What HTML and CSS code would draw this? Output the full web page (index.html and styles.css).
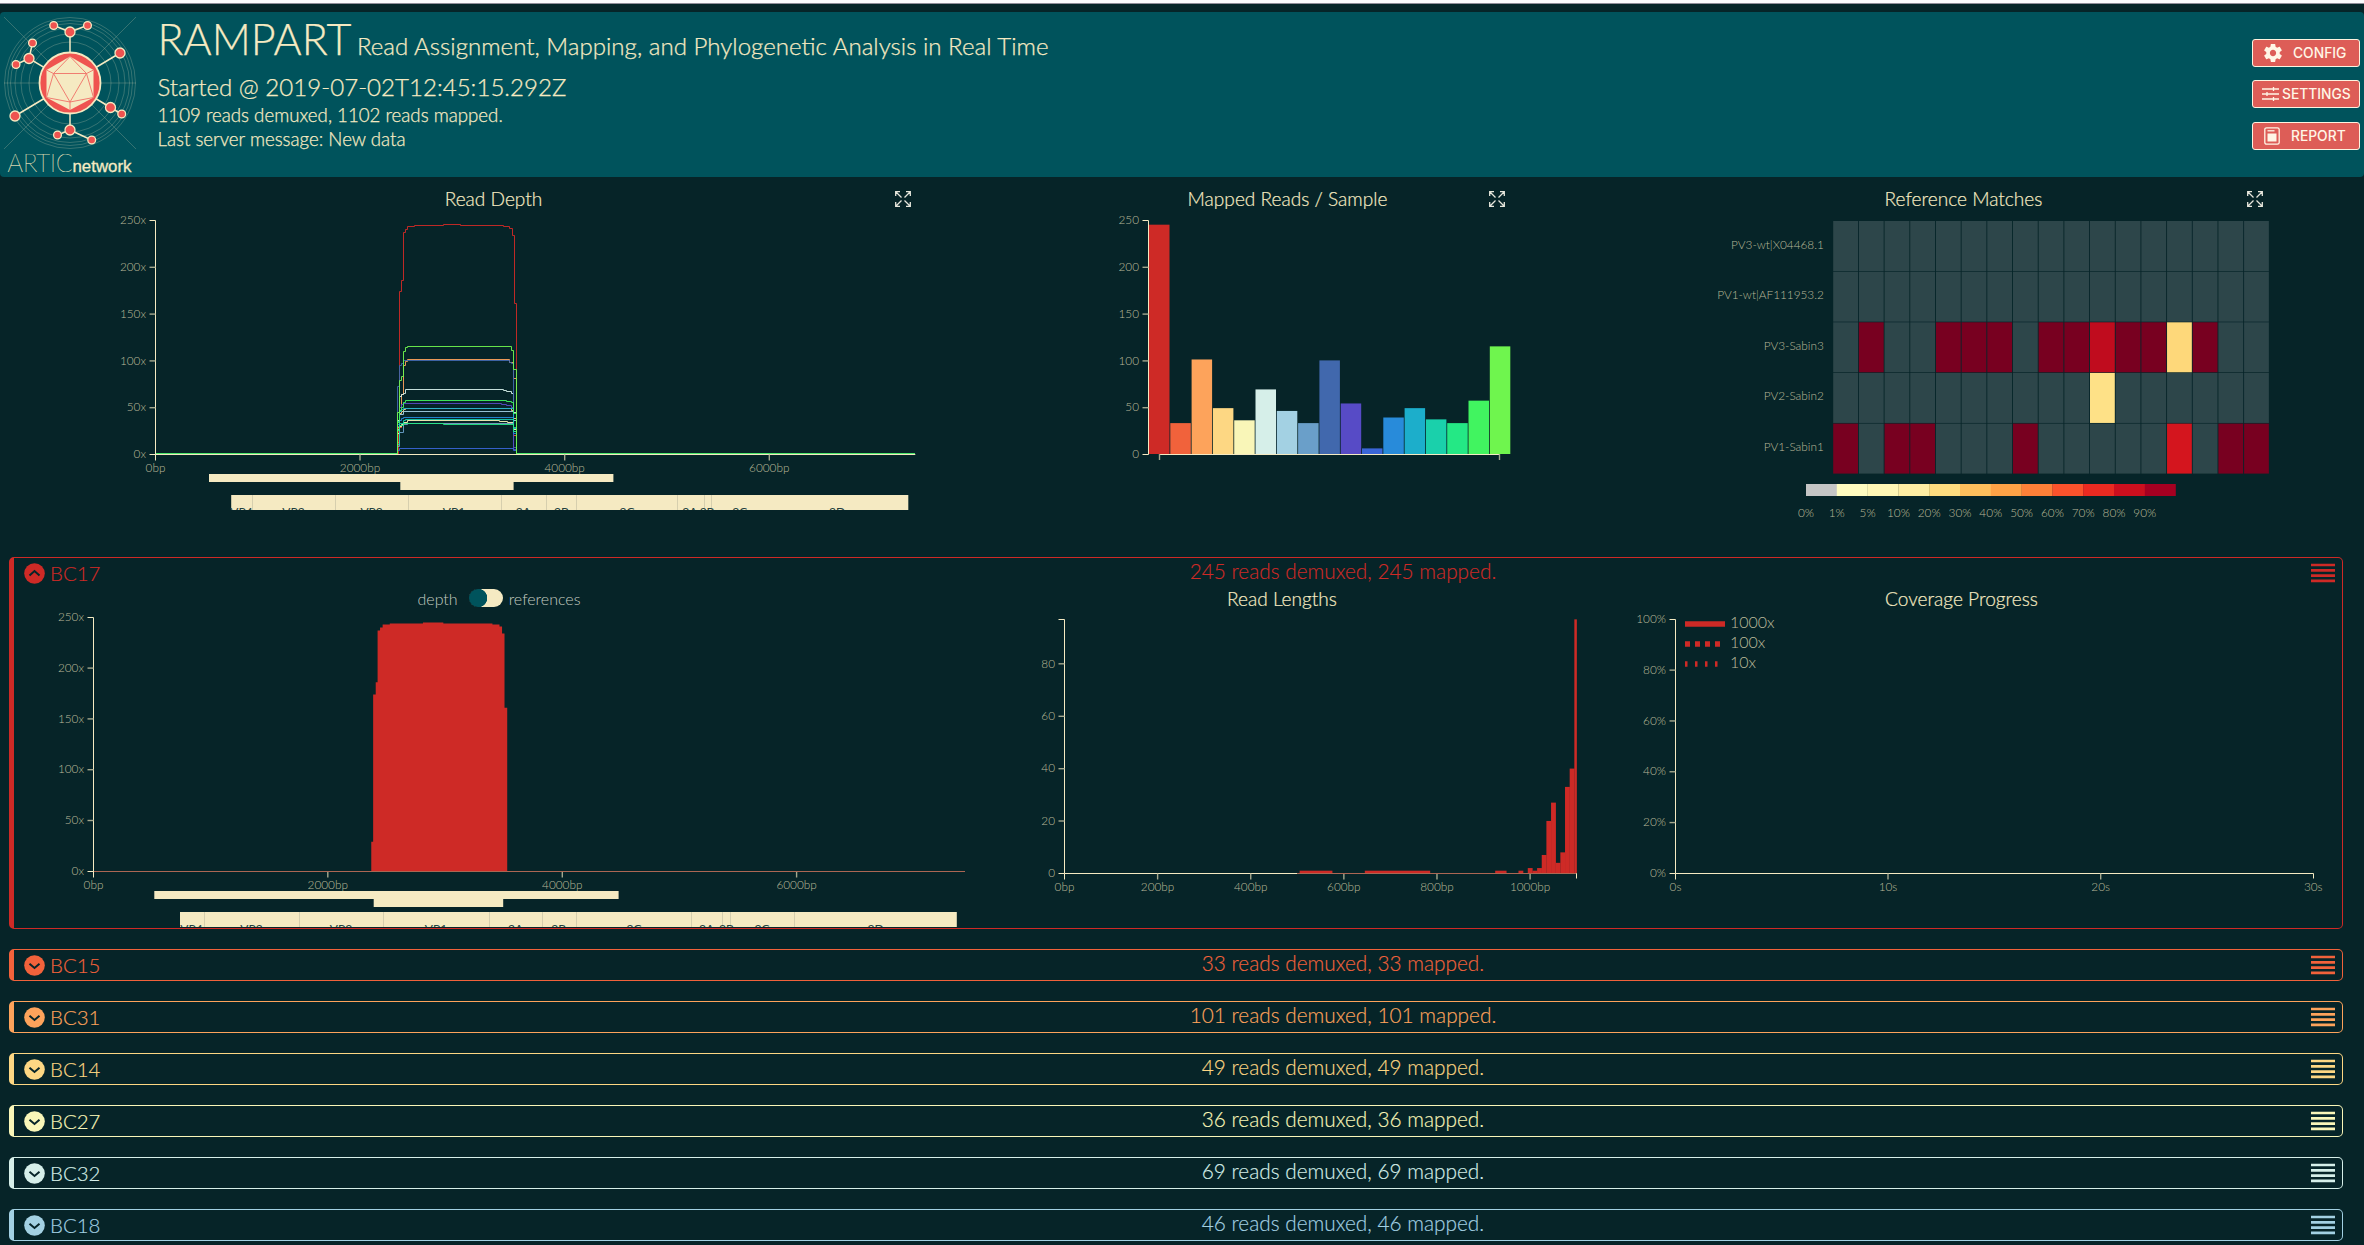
FILE: index.html
```html
<!DOCTYPE html>
<html lang="en">
<head>
<meta charset="utf-8">
<title>RAMPART</title>
<link rel="stylesheet" href="styles.css">
</head>
<body>
<svg class="defs" width="0" height="0" aria-hidden="true">
  <symbol id="expand" viewBox="0 0 16 16">
    <path d="M.7 5V.7H5M11 .7h4.300V5M15.300 11v4.300H11M5 15.300H.7V11M1 1l5.500 5.500M15 1L9.500 6.500M15 15L9.500 9.500M1 15l5.500-5.500" fill="none" stroke="currentColor" stroke-width="1.300"/>
  </symbol>
  <symbol id="down" viewBox="0 0 21 21">
    <circle cx="10.500" cy="10.500" r="10.300" fill="currentColor"/>
    <path d="M5.500 8.800l5 4.200 5-4.200" fill="none" stroke="#062428" stroke-width="2"/>
  </symbol>
  <symbol id="up" viewBox="0 0 21 21">
    <circle cx="10.500" cy="10.500" r="10.300" fill="currentColor"/>
    <path d="M5.500 12.500l5-4.500 5 4.500" fill="none" stroke="#062428" stroke-width="2"/>
  </symbol>
  <symbol id="menu" viewBox="0 0 24 20">
    <path d="M0 2h24M0 7.300h24M0 12.600h24M0 17.900h24" stroke="currentColor" stroke-width="2.700"/>
  </symbol>
</svg>

<header class="banner">
  <svg class="logo" width="140" height="165" viewBox="0 12 140 165">
    <g fill="none" stroke="#f5eac2" stroke-opacity=".28" stroke-width=".8">
      <circle cx="70" cy="83" r="65.500"/><circle cx="70" cy="83" r="62.500"/><circle cx="70" cy="83" r="59.500"/><circle cx="70" cy="83" r="55"/><circle cx="70" cy="83" r="49"/><circle cx="70" cy="83" r="41"/>
      <path d="M4 17l132 132M136 17L4 149M4 83h132"/>
    </g>
    <path d="M70 83V32L54 25.500M70 32l17-6.500M70 83l50-30M70 83L29 58.500 32.500 43M29 58.500L16 64.500M70 83L15 116M70 83l40.500 24.500 11 6.500M70 83v47l-12.500 5M70 130l21.500 10" fill="none" stroke="#f5eac2" stroke-width="1.500"/>
    <g fill="#ef5350" stroke="#f5eac2" stroke-width="1.300">
      <circle cx="70" cy="83" r="30.500" stroke-width="1.800"/>
      <circle cx="70" cy="32" r="5"/><circle cx="53.700" cy="25.500" r="3.900"/><circle cx="87.500" cy="25.500" r="3.900"/>
      <circle cx="120" cy="53" r="5"/><circle cx="29" cy="58.500" r="5"/><circle cx="32.500" cy="43" r="3.900"/><circle cx="16" cy="64.500" r="3.900"/>
      <circle cx="15" cy="116" r="5"/><circle cx="110.500" cy="107.500" r="5"/><circle cx="121.700" cy="114" r="3.900"/>
      <circle cx="70" cy="130" r="5"/><circle cx="57.500" cy="135" r="3.900"/><circle cx="91.700" cy="140" r="3.900"/>
    </g>
    <path d="M70 56.500L93.500 70v27.500L70 110 46.500 97.500V70z" fill="#f5eac2"/>
    <path d="M70 56.500L53.500 73.500h33zM53.500 73.500L70 102l16.500-28.500M46.500 70l7 3.500-7 24L70 102v8M93.500 70l-7 3.500 7 24L70 102" fill="none" stroke="#ef7068" stroke-width=".9"/>
    <text class="logo-thin" x="7.500" y="172" textLength="65" lengthAdjust="spacingAndGlyphs">ARTIC</text>
    <text class="logo-bold" x="72.500" y="172" textLength="59" lengthAdjust="spacingAndGlyphs">network</text>
  </svg>
  <div class="intro">
    <h1 class="name">RAMPART <span class="tagline">Read Assignment, Mapping, and Phylogenetic Analysis in Real Time</span></h1>
    <p class="started">Started @ 2019-07-02T12:45:15.292Z</p>
    <p class="info">1109 reads demuxed, 1102 reads mapped.</p>
    <p class="info">Last server message: New data</p>
  </div>
  <nav class="actions">
    <button class="action"><svg width="18" height="18" viewBox="2 2 20 20"><path fill="currentColor" d="M19.430 12.980c.04-.32.070-.64.070-.98s-.03-.66-.07-.98l2.110-1.650c.19-.15.240-.42.120-.64l-2-3.460c-.12-.22-.39-.3-.61-.22l-2.490 1c-.52-.4-1.080-.73-1.690-.98l-.38-2.650C14.460 2.180 14.250 2 14 2h-4c-.25 0-.46.180-.49.420l-.38 2.650c-.61.250-1.170.590-1.690.980l-2.490-1c-.23-.09-.49 0-.61.220l-2 3.460c-.13.220-.07.490.120.640l2.110 1.650c-.04.320-.07.650-.07.980s.030.660.070.980l-2.110 1.650c-.19.150-.24.420-.12.640l2 3.460c.12.220.390.300.610.220l2.490-1c.52.400 1.080.730 1.690.980l.38 2.650c.03.240.240.420.490.420h4c.25 0 .46-.18.490-.42l.38-2.650c.61-.25 1.170-.59 1.690-.98l2.490 1c.23.090.490 0 .61-.22l2-3.460c.12-.22.070-.49-.12-.64l-2.110-1.650zM12 15.500c-1.930 0-3.500-1.570-3.500-3.500s1.570-3.500 3.500-3.500 3.500 1.570 3.500 3.500-1.570 3.500-3.500 3.500z"/></svg><span class="action-text">CONFIG</span></button>
    <button class="action action-tight"><svg width="17" height="14" viewBox="0 0 17 14"><path d="M0 2h17M0 7h17M0 12h17M11.500 0v4M5 5v4M11.500 10v4" stroke="currentColor" stroke-width="1.300"/></svg><span class="action-text">SETTINGS</span></button>
    <button class="action"><svg width="16" height="18" viewBox="0 0 16 18"><rect x=".8" y=".8" width="14.400" height="16.400" rx="1.800" fill="none" stroke="currentColor" stroke-width="1.300"/><path d="M3.500 3.800h7" stroke="currentColor" stroke-width="1.300"/><path d="M3.500 6.500h9v8h-9z" fill="currentColor"/></svg><span class="action-text">REPORT</span></button>
  </nav>
</header>

<main>
  <section class="overview">
    <article class="chart">
      <div class="chart-head"><h2 class="chart-title">Read Depth</h2><svg class="expand"><use href="#expand"/></svg></div>
      <svg class="plot" id="depth-all" width="845" height="298" viewBox="75 212 845 298"></svg>
    </article>
    <article class="chart">
      <div class="chart-head"><h2 class="chart-title">Mapped Reads / Sample</h2><svg class="expand"><use href="#expand"/></svg></div>
      <svg class="plot" id="mapped" width="445" height="298" viewBox="1069 212 445 298"></svg>
    </article>
    <article class="chart">
      <div class="chart-head"><h2 class="chart-title">Reference Matches</h2><svg class="expand"><use href="#expand"/></svg></div>
      <svg class="plot" id="matches" width="615" height="318" viewBox="1663 212 615 318"></svg>
    </article>
  </section>

  <section class="samples">
    <article class="sample s-red">
      <div class="sample-head"><div class="sample-name"><svg class="chev"><use href="#up"/></svg><span>BC17</span></div><p class="sample-info">245 reads demuxed, 245 mapped.</p><svg class="menu"><use href="#menu"/></svg></div>
      <div class="sample-body">
        <div class="detail">
          <div class="switch-row"><span>depth</span><span class="switch"></span><span>references</span></div>
          <svg class="plot" id="depth-one" width="945" height="315" viewBox="28 612 945 315"></svg>
        </div>
        <div class="detail">
          <h2 class="detail-title">Read Lengths</h2>
          <svg class="plot" id="lengths" width="590" height="300" viewBox="987 612 590 300"></svg>
        </div>
        <div class="detail">
          <h2 class="detail-title">Coverage Progress</h2>
          <svg class="plot" id="coverage" width="735" height="300" viewBox="1594 612 735 300"></svg>
        </div>
      </div>
    </article>
    <article class="sample s-coral"><div class="sample-head"><div class="sample-name"><svg class="chev"><use href="#down"/></svg><span>BC15</span></div><p class="sample-info">33 reads demuxed, 33 mapped.</p><svg class="menu"><use href="#menu"/></svg></div></article>
    <article class="sample s-orange"><div class="sample-head"><div class="sample-name"><svg class="chev"><use href="#down"/></svg><span>BC31</span></div><p class="sample-info">101 reads demuxed, 101 mapped.</p><svg class="menu"><use href="#menu"/></svg></div></article>
    <article class="sample s-gold"><div class="sample-head"><div class="sample-name"><svg class="chev"><use href="#down"/></svg><span>BC14</span></div><p class="sample-info">49 reads demuxed, 49 mapped.</p><svg class="menu"><use href="#menu"/></svg></div></article>
    <article class="sample s-yellow"><div class="sample-head"><div class="sample-name"><svg class="chev"><use href="#down"/></svg><span>BC27</span></div><p class="sample-info">36 reads demuxed, 36 mapped.</p><svg class="menu"><use href="#menu"/></svg></div></article>
    <article class="sample s-mint"><div class="sample-head"><div class="sample-name"><svg class="chev"><use href="#down"/></svg><span>BC32</span></div><p class="sample-info">69 reads demuxed, 69 mapped.</p><svg class="menu"><use href="#menu"/></svg></div></article>
    <article class="sample s-sky"><div class="sample-head"><div class="sample-name"><svg class="chev"><use href="#down"/></svg><span>BC18</span></div><p class="sample-info">46 reads demuxed, 46 mapped.</p><svg class="menu"><use href="#menu"/></svg></div></article>
  </section>
</main>
<script src="charts.js"></script>
</body>
</html>
```

FILE: charts.js
```js
const NS = 'http://www.w3.org/2000/svg';
const add = (parent, tag, attrs, text) => {
  const el = document.createElementNS(NS, tag);
  for (const k in attrs) el.setAttribute(k, attrs[k]);
  if (text !== undefined) el.textContent = text;
  parent.appendChild(el);
  return el;
};
const byId = id => document.getElementById(id);
const snap = v => Math.floor(v) + 0.5;

function axisY(svg, x, top, bottom, ticks) {
  add(svg, 'path', { class: 'axis', d: `M${x - 6} ${snap(top)}H${x}V${snap(bottom)}H${x - 6}` });
  for (const [y, label] of ticks) {
    if (y > top + 1 && y < bottom - 1) add(svg, 'path', { class: 'tick', d: `M${x - 6} ${y}H${x}` });
    if (label) add(svg, 'text', { class: 'label end', x: x - 9.5, y: y + 3.7 }, label);
  }
}
function axisX(svg, y, left, right, ticks, baseline, caps) {
  const s = caps.includes('l') ? `M${left} ${y + 6}V${y}` : `M${left} ${y}`;
  add(svg, 'path', { class: 'axis', d: s + `H${right}` + (caps.includes('r') ? `V${y + 5}` : '') });
  for (const [x, label] of ticks) {
    if (x > left + 1 && x < right - 1) add(svg, 'path', { class: 'tick', d: `M${x} ${y}V${y + 6}` });
    add(svg, 'text', { class: 'label mid', x, y: baseline }, label);
  }
}

const colours = ['#ce2a26', '#f1623b', '#fda35b', '#fdd783', '#f9f6b8', '#d6efe9', '#a3d1e3', '#6a9fc9', '#4168ad',
  '#574bc6', '#3a66d8', '#288bda', '#1caecb', '#1ad0ab', '#24e885', '#41f460', '#6ff54e'];
const mapped = [245, 33, 101, 49, 36, 69, 46, 33, 100, 54, 6, 39, 49, 37, 33, 57, 115];

/* depth steps: [first base, reads covering it] */
const bc17 = [[2370, 29], [2386, 174], [2408, 186], [2424, 237], [2445, 240], [2467, 243], [2528, 244], [2811, 245],
  [2985, 244], [3404, 243], [3464, 241], [3486, 234], [3507, 161], [3530, 0]];
const depth = [
  bc17,
  [[2368, 12], [2387, 28], [2407, 31], [2426, 33], [3501, 20], [3530, 0]],
  [[2368, 28], [2387, 50], [2407, 64], [2426, 95], [2446, 99], [2465, 101], [3462, 98], [3501, 81], [3530, 0]],
  [[2368, 22], [2387, 44], [2407, 46], [2426, 48], [2446, 49], [3482, 47], [3501, 38], [3530, 0]],
  [[2368, 22], [2387, 30], [2407, 32], [2426, 34], [2465, 36], [3360, 35], [3443, 34], [3501, 26], [3530, 0]],
  [[2368, 36], [2387, 62], [2407, 64], [2426, 65], [2446, 69], [3404, 68], [3430, 67], [3482, 65], [3501, 45], [3530, 0]],
  [[2368, 26], [2387, 42], [2426, 46], [3501, 36], [3530, 0]],
  [[2368, 8], [2387, 23], [2426, 32], [2465, 33], [3501, 24], [3530, 0]],
  [[2368, 72], [2387, 95], [2407, 97], [2426, 100], [3462, 98], [3482, 97], [3501, 7], [3530, 0]],
  [[2368, 30], [2387, 50], [2407, 53], [2426, 54], [3385, 53], [3430, 52], [3482, 50], [3501, 5], [3530, 0]],
  [[2368, 4], [2387, 6], [3501, 4], [3530, 0]],
  [[2368, 32], [2387, 36], [2407, 38], [2426, 39], [3501, 22], [3530, 0]],
  [[2368, 35], [2387, 46], [2407, 48], [2426, 49], [3501, 27], [3530, 0]],
  [[2368, 10], [2387, 33], [2426, 36], [2446, 37], [3501, 28], [3530, 0]],
  [[2368, 25], [2387, 31], [2426, 33], [2810, 32], [3501, 24], [3530, 0]],
  [[2368, 34], [2387, 47], [2407, 50], [2426, 55], [2446, 57], [3430, 56], [3482, 55], [3501, 44], [3530, 0]],
  [[2368, 45], [2387, 79], [2407, 83], [2426, 110], [2446, 114], [2465, 115], [3482, 111], [3501, 91], [3530, 0]]
];

function genome(svg, read, amplicon, genes, y) {
  add(svg, 'rect', { class: 'gene', x: read[0], y, width: read[1] - read[0], height: 8 });
  add(svg, 'rect', { class: 'gene', x: amplicon[0], y: y + 8, width: amplicon[1] - amplicon[0], height: 8 });
  const [left, right] = genes.span;
  add(svg, 'rect', { class: 'gene', x: left, y: y + 21, width: right - left, height: 15 });
  genes.cuts.forEach(x => add(svg, 'path', { class: 'cut', d: `M${snap(x)} ${y + 21}v15` }));
  const names = ['VP4', 'VP2', 'VP3', 'VP1', '2A', '2B', '2C', '3A', '3B', '3C', '3D'];
  genes.mids.forEach((x, i) => add(svg, 'text', { class: 'gene-name mid', x, y: y + 42 }, names[i]));
}

/* all samples: read depth */
{
  const svg = byId('depth-all');
  const X = b => 155.5 + b * 0.10233, Y = v => 454.2 - v * 0.936;
  depth.forEach((steps, i) => {
    let d = `M155.5 454H${snap(X(steps[0][0]))}`;
    steps.forEach(([b, v], j) => {
      d += `V${v ? snap(Y(v)) : 454}`;
      d += `H${steps[j + 1] ? snap(X(steps[j + 1][0])) : 915}`;
    });
    add(svg, 'path', { class: 'depth-line', d, stroke: colours[i] });
  });
  axisY(svg, 155.5, 220.5, 454.5, [0, 50, 100, 150, 200, 250].map(v => [454.5 - v * 0.936, v + 'x']));
  axisX(svg, 454.5, 155.5, 915.3, [[155.5, '0bp'], [360, '2000bp'], [564.7, '4000bp'], [769.3, '6000bp']], 472, 'l');
  genome(svg, [209, 613.4], [400.3, 513.6], {
    span: [231.2, 908.3],
    cuts: [252.3, 335.3, 408.5, 501.7, 546.7, 576.5, 677.3, 704.4, 711.5],
    mids: [241.5, 293.5, 371.6, 454, 523.4, 561.3, 627, 689.8, 707, 739.7, 837]
  }, 474);
}

/* mapped reads per sample */
{
  const svg = byId('mapped');
  mapped.forEach((v, i) => add(svg, 'rect', { x: 1149 + i * 21.3, y: 454 - v * 0.936, width: 20.5, height: v * 0.936, fill: colours[i] }));
  axisY(svg, 1148.5, 220.5, 454.5, [0, 50, 100, 150, 200, 250].map(v => [454.5 - v * 0.936, String(v)]));
  add(svg, 'path', { class: 'axis', d: 'M1159 454.5H1499.500' });
  add(svg, 'path', { class: 'tick', d: 'M1159.500 454V460M1499.500 454V460' });
}

/* reference matches heat map */
{
  const svg = byId('matches');
  const D = '#780020';
  const rows = [
    ['PV3-wt|X04468.1', {}],
    ['PV1-wt|AF111953.2', {}],
    ['PV3-Sabin3', { 1: D, 4: D, 5: D, 6: D, 8: D, 9: D, 10: '#c00c1e', 11: D, 12: D, 13: '#fed87a', 14: D }],
    ['PV2-Sabin2', { 10: '#fee187' }],
    ['PV1-Sabin1', { 0: D, 2: D, 3: D, 7: D, 13: '#d4151e', 15: D, 16: D }]
  ];
  rows.forEach(([name, hits], r) => {
    const y = 221 + r * 50.65;
    add(svg, 'text', { class: 'label end', x: 1823.8, y: y + 27.5 }, name);
    for (let c = 0; c < 17; c++)
      add(svg, 'rect', { x: 1833.2 + c * 25.68, y, width: 24.8, height: 50, fill: hits[c] || '#2d464a' });
  });
  const scale = ['#c5c5c5', '#fffcc0', '#fff7b5', '#feeda3', '#fedd80', '#febf5c', '#fea246', '#fd8038', '#fa522c', '#ea2a21', '#cc0f1e', '#a50021'];
  const names = ['0%', '1%', '5%', '10%', '20%', '30%', '40%', '50%', '60%', '70%', '80%', '90%'];
  scale.forEach((fill, i) => {
    add(svg, 'rect', { x: 1806 + i * 30.8, y: 484, width: 31, height: 12, fill });
    add(svg, 'text', { class: 'label mid', x: 1806 + i * 30.8, y: 516.7 }, names[i]);
  });
}

/* BC17: depth */
{
  const svg = byId('depth-one');
  const X = b => 93.5 + b * 0.1172, Y = v => 871.3 - v * 1.016;
  let d = `M${X(2370)} 871`;
  bc17.forEach(([b, v], j) => { d += `V${Y(v)}` + (bc17[j + 1] ? `H${X(bc17[j + 1][0])}` : ''); });
  add(svg, 'path', { d: d + 'Z', fill: colours[0] });
  axisY(svg, 93.5, 617.3, 871.4, [0, 50, 100, 150, 200, 250].map(v => [871.3 - v * 1.016, v + 'x']));
  axisX(svg, 871.5, 93.5, 965, [[93.5, '0bp'], [327.8, '2000bp'], [562.3, '4000bp'], [796.6, '6000bp']], 888.7, 'l');
  add(svg, 'path', { class: 'zero', d: 'M94 871.500H965' });
  genome(svg, [154.3, 618.6], [373.7, 503.2], {
    span: [180, 956.8],
    cuts: [204, 299, 383.3, 489.2, 542, 576.5, 691.3, 722.6, 730.2, 794.6],
    mids: [191.5, 251.5, 341, 436, 515.5, 558.7, 634, 706.6, 726.4, 762, 875.6]
  }, 891);
}

/* BC17: read lengths */
{
  const svg = byId('lengths');
  const X = b => 1064.5 + b * 0.4656, k = 2.618;
  const bins = [[505, 575, 1], [645, 785, 1], [925, 949, 1], [975, 985, 1], [995, 1005, 2], [1005, 1015, 1], [1015, 1025, 2],
    [1025, 1035, 7], [1035, 1045, 20], [1045, 1055, 27], [1055, 1065, 4], [1065, 1075, 8], [1075, 1085, 33], [1085, 1095, 40], [1095, 1100, 97]];
  bins.forEach(([a, b, v]) => add(svg, 'rect', { x: X(a), y: 873.3 - v * k, width: (b - a) * 0.4656 + 0.2, height: v * k, fill: colours[0] }));
  axisY(svg, 1064.5, 619.3, 873.4, [[873.4, '0'], [821, '20'], [768.7, '40'], [716.3, '60'], [663.8, '80']]);
  axisX(svg, 873.5, 1064.5, 1576.5, [0, 200, 400, 600, 800, 1000].map(v => [X(v), v + 'bp']), 891.3, 'lr');
  add(svg, 'path', { class: 'zero', d: 'M1297 873.500H1576' });
}

/* BC17: coverage progress */
{
  const svg = byId('coverage');
  axisY(svg, 1675.5, 619.3, 873.4, [0, 20, 40, 60, 80, 100].map(v => [873.4 - v * 2.541, v + '%']));
  axisX(svg, 873.5, 1675.5, 2313.5, [[1675.5, '0s'], [1888, '10s'], [2100.7, '20s'], [2313.3, '30s']], 891.3, 'lr');
  [['1000x', 'none'], ['100x', '5 5'], ['10x', '2.5 7.5']].forEach(([name, dash], i) => {
    add(svg, 'path', { class: 'key', d: `M1685 ${624 + i * 20}h40`, 'stroke-dasharray': dash });
    add(svg, 'text', { class: 'key-text', x: 1730, y: 627.8 + i * 20.1 }, name);
  });
}
```

FILE: styles.css
```css
* { box-sizing: border-box; }
body {
  margin: 0;
  height: 1245px;
  overflow: hidden;
  border-top: 3px solid #fbfafc;
  background: #062428;
  color: #f5eac2;
  font-family: Lato, "Open Sans", sans-serif;
  font-weight: 300;
}
body::before { content: ""; display: block; height: 1px; background: #8f8c98; }
h1, h2, p { margin: 0; font-weight: 300; }
.defs { display: block; }

.banner {
  display: flex;
  height: 165px;
  margin-top: 8px;
  padding-right: 4px;
  border-radius: 4px;
  background: #00535c;
}
.logo { flex: none; }
.logo-thin { font: 100 25px Lato, sans-serif; fill: #f5eac2; stroke: #f5eac2; stroke-width: .2; }
.logo-bold { font: 400 17px "Liberation Sans", sans-serif; fill: #f5eac2; stroke: #f5eac2; stroke-width: .3; }
.intro { flex: 1; padding-left: 17.500px; -webkit-text-stroke: .25px; }
.name { margin-top: -1px; font-size: 43px; line-height: 56px; white-space: pre; }
.tagline { font-size: 24.100px; margin-left: -5px; }
.started { margin-top: -3px; font-size: 24.100px; line-height: 32px; }
.info { font-size: 18.700px; line-height: 24px; }
.started, .info, .tagline { font-weight: 300; }
.actions { display: flex; flex-direction: column; gap: 13.300px; width: 108px; padding-top: 27px; }
.action {
  display: flex;
  align-items: center;
  gap: 11px;
  height: 28px;
  padding: 0 0 0 11px;
  border: 1px solid #fdf3e0;
  border-radius: 3px;
  background: #dd5d57;
  color: #fff6e6;
  font: 500 13.800px Inter, "Liberation Sans", sans-serif;
}
.action-tight { gap: 3px; padding-left: 9px; }

.overview {
  display: grid;
  grid-template-columns: 837px 437px 601px;
  column-gap: 157px;
  height: 380px;
  padding-left: 75px;
}
.chart-head { display: grid; grid-template-columns: 1fr auto 1fr; align-items: center; height: 35px; padding-top: 9px; }
.chart-title { grid-column: 2; font-size: 19.100px; line-height: 24px; -webkit-text-stroke: .2px; }
.expand { width: 16px; height: 16px; margin-right: 1px; justify-self: end; color: #e6e6dc; }
.plot { display: block; }

.samples { display: flex; flex-direction: column; gap: 20px; padding: 0 21px 0 9px; }
.sample { height: 32px; border: 1px solid; border-left-width: 5px; border-radius: 5px; }
.s-red { height: 372px; color: #ce2a26; }
.s-coral { color: #f1623b; }
.s-orange { color: #fda35b; }
.s-gold { color: #fdd783; }
.s-yellow { color: #f9f6b8; }
.s-mint { color: #d6efe9; }
.s-sky { color: #a3d1e3; }
.sample-head { display: grid; grid-template-columns: 734px 1170px 1fr; height: 30px; padding: 0 7px 0 10px; font-size: 20.800px; -webkit-text-stroke: .15px; }
.sample-name { display: flex; gap: 5px; padding-top: 5px; font-size: 20.400px; line-height: 22px; }
.sample-name span { margin-top: -1px; }
.chev { width: 21px; height: 21px; }
.sample-info { padding-top: 1px; line-height: 24px; text-align: center; }
.menu { width: 24px; height: 20px; margin-top: 5px; justify-self: end; }

.sample-body { display: grid; grid-template-columns: 942px 590px 735px; column-gap: 17px; padding-left: 14px; color: #f5eac2; }
.detail-title { height: 24px; font-size: 19.100px; line-height: 21px; text-align: center; -webkit-text-stroke: .2px; }
.switch-row { display: flex; justify-content: center; gap: 6px; height: 24px; font-size: 16px; line-height: 21px; color: #c3cbc0; }
.switch { width: 34px; height: 18px; margin: 1px 0 0 5px; border-radius: 9px; background: radial-gradient(circle at 9px 9px, #00535c 9px, #f5eac2 9.500px); }

.axis { fill: none; stroke: #f5eac2; }
.tick { fill: none; stroke: #a4a78d; stroke-width: 1.400; }
.label { font-size: 11.800px; fill: #f5eac2; fill-opacity: .74; }
.end { text-anchor: end; }
.mid { text-anchor: middle; }
.depth-line { fill: none; stroke-width: 1; stroke-opacity: .92; }
.gene { fill: #f5eac2; }
.cut { stroke: #d6cfae; }
.gene-name { font-size: 12px; font-weight: 400; fill: #23413f; }
.zero { stroke: #ab6653; }
.key { stroke: #ce2a26; stroke-width: 5.500; }
.key-text { font-size: 16px; fill: #f5eac2; fill-opacity: .76; }
#matches, #coverage, #lengths { overflow: visible; }
```
